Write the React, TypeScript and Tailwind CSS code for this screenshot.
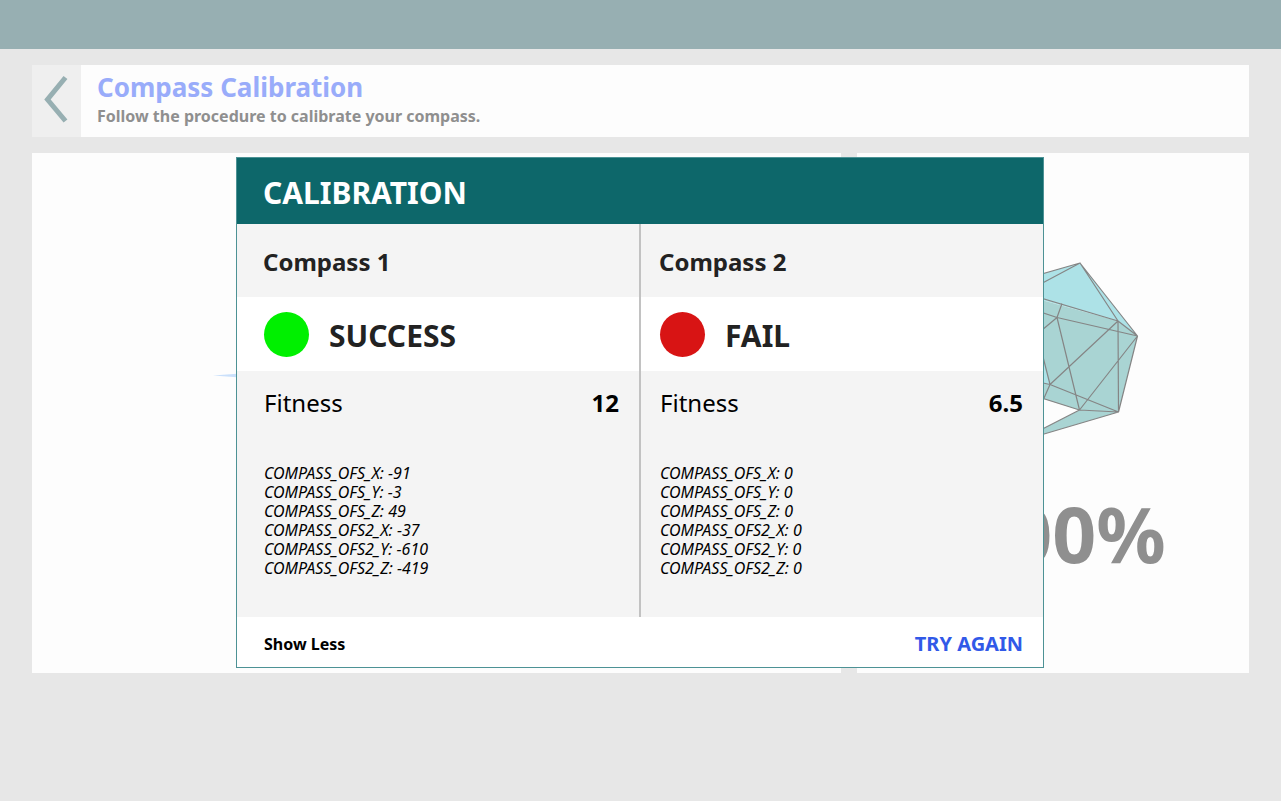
type CompassResult = {
  name: string;
  success: boolean;
  fitness: string;
  offsets: [string, number][];
};

const results: CompassResult[] = [
  {
    name: "Compass 1",
    success: true,
    fitness: "12",
    offsets: [
      ["COMPASS_OFS_X", -91],
      ["COMPASS_OFS_Y", -3],
      ["COMPASS_OFS_Z", 49],
      ["COMPASS_OFS2_X", -37],
      ["COMPASS_OFS2_Y", -610],
      ["COMPASS_OFS2_Z", -419],
    ],
  },
  {
    name: "Compass 2",
    success: false,
    fitness: "6.5",
    offsets: [
      ["COMPASS_OFS_X", 0],
      ["COMPASS_OFS_Y", 0],
      ["COMPASS_OFS_Z", 0],
      ["COMPASS_OFS2_X", 0],
      ["COMPASS_OFS2_Y", 0],
      ["COMPASS_OFS2_Z", 0],
    ],
  },
];

function Polyhedron() {
  return (
    <svg width="192" height="200" viewBox="0 0 192 200" aria-hidden="true" fill="none">
      <path d="M123 14 L180.5 87 L161 72 L30 36 L50 35 Z" fill="#ade2e7" />
      <path d="M30 36 L161 72 L180.5 87 L161.5 163 L122.500 161 L87 150 L30 132 Z" fill="#a9d4d3" />
      <path d="M60 193 L122.500 161 L161.500 163 Z" fill="#a9d4d3" />
      <path d="M82 92 L93 135.500 L72 132 Z" fill="#ade2e7" />
      <path
        d="M123 14 L50 35 M123 14 L50 53 M123 14 L161 72 L180.500 87 Z M161 72 L50 39 M180.500 87 L161.500 163 L161 72 M180.500 87 L100 68.500 L50 52 M105 54.500 L100 68.500 L122.500 161 L180.500 87 M100 68.500 L60 102 M161 72 L93 135.500 L161.500 163 L122.500 161 L50 138 M122.500 161 L60 193 L161.500 163 M93 135.500 L72 131 M93 135.500 L82 92 M93 135.500 L80 165"
        stroke="#858585"
        strokeWidth="1.2"
        strokeLinejoin="round"
      />
    </svg>
  );
}

function ResultColumn({ result, first }: { result: CompassResult; first: boolean }) {
  const inset = first ? "pl-[27px] pr-5" : "pl-[19px] pr-5";
  const headingInset = first ? "pl-[26px] pr-5" : "pl-[18px] pr-5";
  return (
    <section className={first ? "border-r-2 border-[#c2c2c2]" : ""}>
      <h3 className={`${headingInset} flex h-[73px] items-center pt-[2px] text-2xl font-bold text-[#222]`}>
        {result.name}
      </h3>
      <div className={`${inset} flex h-[74px] items-center gap-5 bg-white`}>
        <span
          className={`size-[45px] rounded-full ${result.success ? "bg-[#00f000]" : "bg-[#d81414]"}`}
        />
        <strong className="pt-1 text-[30px] leading-9 font-bold text-[#222]">
          {result.success ? "SUCCESS" : "FAIL"}
        </strong>
      </div>
      <div className={`${inset} pt-4 pb-[39px]`}>
        <p className="flex items-baseline justify-between text-2xl">
          <span>Fitness</span>
          <b>{result.fitness}</b>
        </p>
        <ul className="pt-[45px] text-base leading-[19px] italic">
          {result.offsets.map(([key, value]) => (
            <li key={key}>{`${key}: ${value}`}</li>
          ))}
        </ul>
      </div>
    </section>
  );
}

export default function App() {
  return (
    <div className="relative min-h-screen bg-[#e7e7e7] font-['Noto_Sans',sans-serif] text-black">
      <header className="h-[49px] bg-[#97afb2]" />
      <main className="flex flex-col gap-4 px-8 pt-4">
        <div className="flex h-[72px] bg-[#fdfdfd]">
          <button
            type="button"
            aria-label="Back"
            className="flex w-[49px] items-center justify-center bg-[#efefef] pr-[2px] pb-1"
          >
            <svg width="24" height="48" viewBox="0 0 24 48" fill="none" aria-hidden="true">
              <path d="M21.500 2.500 L3.500 24.500 L21.500 46" stroke="#97afb2" strokeWidth="5" />
            </svg>
          </button>
          <div className="px-4 pt-1">
            <h1 className="text-[26px] leading-9 font-bold text-[#99acfa]">Compass Calibration</h1>
            <p className="text-base leading-[22px] font-bold text-[#8f8f8f]">
              Follow the procedure to calibrate your compass.
            </p>
          </div>
        </div>
        <div className="grid h-[520px] grid-cols-[809fr_392fr] gap-4">
          <section className="flex items-center justify-center bg-[#fdfdfd] pb-[75px]">
            <svg width="448" height="5" viewBox="0 0 448 5" aria-hidden="true">
              <path d="M0 2.500 L24 0.800 L224 0 L424 0.800 L448 2.500 L424 4.200 L224 5 L24 4.200 Z" fill="#cae0fb" />
            </svg>
          </section>
          <section className="flex flex-col items-center bg-[#fdfdfd] pt-24">
            <Polyhedron />
            <p className="pt-[31px] pl-6 text-[77px] leading-[108px] font-bold text-[#8f8f8f]">100%</p>
          </section>
        </div>
      </main>

      <div className="absolute inset-0 flex items-start justify-center pt-[157px] pr-[17px] pl-4">
        <div
          role="dialog"
          aria-modal="true"
          aria-labelledby="dialog-title"
          className="w-full max-w-[808px] border border-[#4d9295] bg-[#f4f4f4]"
        >
          <h2
            id="dialog-title"
            className="flex h-[66px] items-center bg-[#0d676a] px-[26px] pt-1 text-[30px] leading-9 font-bold text-white"
          >
            CALIBRATION
          </h2>
          <div className="grid grid-cols-[404fr_402fr]">
            {results.map((result, index) => (
              <ResultColumn key={result.name} result={result} first={index === 0} />
            ))}
          </div>
          <footer className="flex h-[50px] items-center justify-between bg-white pt-[3px] pr-5 pl-[27px] font-bold">
            <button type="button">Show Less</button>
            <button type="button" className="text-xl text-[#3159e8]">
              TRY AGAIN
            </button>
          </footer>
        </div>
      </div>
    </div>
  );
}
